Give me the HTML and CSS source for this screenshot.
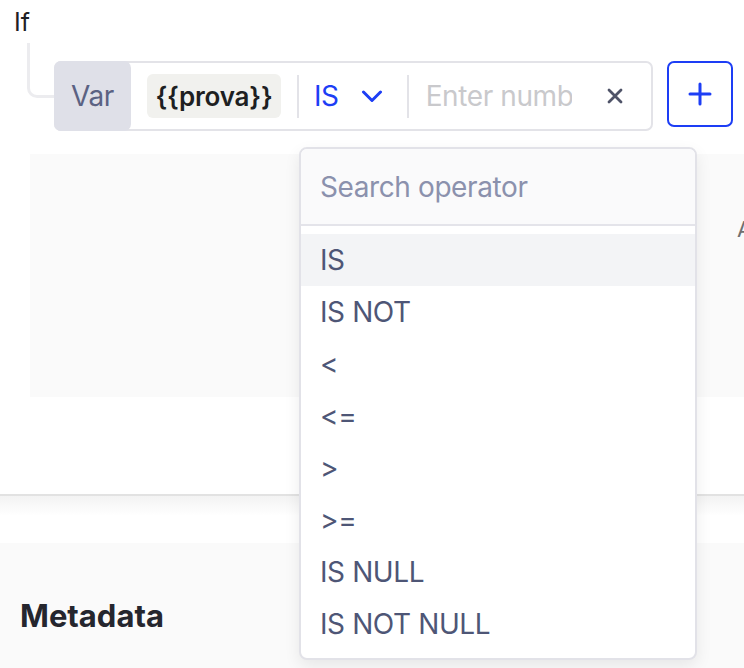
FILE: index.html
```html
<!DOCTYPE html>
<html lang="en">
<head>
<meta charset="utf-8">
<title>Condition builder</title>
<link rel="stylesheet" href="styles.css">
</head>
<body>
<div class="page">
  <div class="if-label">If</div>
  <div class="cond-row">
    <div class="connector"></div>
    <div class="cond-box">
      <div class="var-tag">Var</div>
      <div class="chip">{{prova}}</div>
      <div class="divider"></div>
      <button class="op-select">
        <span class="op-value">IS</span>
        <svg class="chevron" width="22" height="13" viewBox="0 0 22 13"><path d="M2.5 2 L11 10.5 L19.5 2" fill="none" stroke="currentColor" stroke-width="3" stroke-linecap="round" stroke-linejoin="round"/></svg>
      </button>
      <div class="divider"></div>
      <input class="value-input" type="text" placeholder="Enter number">
      <button class="clear-btn" aria-label="Clear">
        <svg width="16" height="16" viewBox="0 0 16 16"><path d="M2 2 L14 14 M14 2 L2 14" fill="none" stroke="currentColor" stroke-width="2.8" stroke-linecap="round"/></svg>
      </button>
    </div>
    <button class="add-btn" aria-label="Add">
      <svg width="24" height="24" viewBox="0 0 24 24"><path d="M12 2 V22 M2 12 H22" fill="none" stroke="currentColor" stroke-width="3" stroke-linecap="round"/></svg>
    </button>
  </div>

  <div class="panel"><span class="panel-text">Add a condition</span></div>

  <div class="sep"></div>

  <div class="meta">
    <h2 class="meta-title">Metadata</h2>
  </div>

  <div class="dropdown">
    <div class="search">Search operator</div>
    <ul class="options">
      <li class="option active">IS</li>
      <li class="option">IS NOT</li>
      <li class="option">&lt;</li>
      <li class="option">&lt;=</li>
      <li class="option">&gt;</li>
      <li class="option">&gt;=</li>
      <li class="option">IS NULL</li>
      <li class="option">IS NOT NULL</li>
    </ul>
  </div>
</div>
</body>
</html>
```

FILE: styles.css
```css
* { box-sizing: border-box; }
html, body { margin: 0; padding: 0; background: #ffffff; }
body {
  font-family: Inter, "Noto Sans", sans-serif;
  color: #1f2024;
  overflow: hidden;
  width: 744px;
  height: 668px;
}
.page { position: relative; width: 744px; height: 668px; overflow: hidden; }

.if-label {
  padding: 7px 0 0 14px;
  font-size: 25px;
  line-height: 30px;
  color: #1f2024;
}

.cond-row {
  display: flex;
  align-items: flex-start;
  margin-top: 6px;
  padding-left: 27px;
}
.connector {
  width: 27px;
  height: 55px;
  border-left: 3px solid #ececef;
  border-bottom: 3px solid #ececef;
  border-bottom-left-radius: 10px;
  flex: none;
}
.cond-box {
  margin-top: 18px;
  width: 599px;
  height: 70px;
  border: 2px solid #e3e3e8;
  border-radius: 7px;
  display: flex;
  align-items: center;
  flex: none;
  letter-spacing: -0.4px;
}
.var-tag {
  align-self: stretch;
  margin: -2px 0 -2px -2px;
  width: 77px;
  background: #dfe0e8;
  border-radius: 7px;
  display: flex;
  align-items: center;
  justify-content: center;
  font-size: 28px;
  color: #5b6283;
  flex: none;
}
.chip {
  margin-left: 16px;
  width: 134px;
  height: 44px;
  padding: 0;
  background: #f1f1ee;
  border-radius: 6px;
  display: flex;
  align-items: center;
  justify-content: center;
  font-size: 26px;
  font-weight: 600;
  letter-spacing: -0.2px;
  color: #1e1f22;
  flex: none;
}
.divider {
  margin-left: 16px;
  width: 2px;
  height: 43px;
  background: #e3e3e8;
  flex: none;
}
.op-select {
  display: flex;
  align-items: center;
  border: 0;
  background: none;
  padding: 0;
  margin-left: 15px;
  margin-right: 8px;
  font-family: inherit;
  letter-spacing: inherit;
  color: #1d3ef5;
  flex: none;
}
.op-value { font-size: 28px; }
.chevron { margin-left: 22px; display: block; }
.value-input {
  margin-left: 17px;
  width: 146px;
  border: 0;
  outline: none;
  padding: 0;
  background: transparent;
  font-family: inherit;
  letter-spacing: inherit;
  font-size: 28px;
  color: #1f2024;
  flex: none;
}
.value-input::placeholder { color: #c9c9cc; }
.clear-btn {
  margin-left: auto;
  margin-right: 28px;
  border: 0;
  background: none;
  padding: 0;
  color: #4f5368;
  display: flex;
}
.add-btn {
  margin-left: 14px;
  margin-top: 18px;
  width: 66px;
  height: 66px;
  border: 2px solid #1d3ef5;
  border-radius: 7px;
  background: #fff;
  color: #1d3ef5;
  display: flex;
  align-items: center;
  justify-content: center;
  padding: 0;
  flex: none;
}

.panel {
  margin: 23px 0 0 30px;
  height: 243px;
  background: #fafafa;
  padding: 62px 0 0 707px;
  white-space: nowrap;
  overflow: hidden;
}
.panel-text { font-size: 22px; color: #707070; }

.sep {
  margin-top: 97px;
  height: 22px;
  border-top: 2px solid #e2e2e2;
  background: linear-gradient(#f3f3f3, #ffffff);
}
.meta {
  margin-top: 27px;
  height: 200px;
  background: #fafafa;
  padding: 55px 0 0 20px;
}
.meta-title {
  margin: 0;
  font-size: 31px;
  line-height: 36px;
  font-weight: 700;
  color: #25262e;
}

.dropdown {
  position: absolute;
  left: 299px;
  top: 147px;
  width: 398px;
  background: #fff;
  border: 2px solid #e2e2e8;
  border-radius: 8px;
  box-shadow: 0 6px 16px rgba(0, 0, 0, 0.08);
  overflow: hidden;
  letter-spacing: -0.4px;
}
.search {
  height: 77px;
  background: #fafafb;
  border-bottom: 2px solid #e4e4ea;
  display: flex;
  align-items: center;
  padding-left: 19px;
  font-size: 28px;
  color: #8b91ad;
}
.options {
  list-style: none;
  margin: 0;
  padding: 8px 0;
}
.option {
  height: 52px;
  display: flex;
  align-items: center;
  padding-left: 19px;
  font-size: 28px;
  color: #4e5676;
}
.option.active { background: #f3f4f6; }
```
